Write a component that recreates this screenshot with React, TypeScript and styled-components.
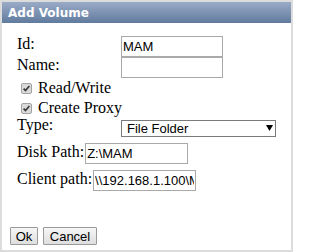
import styled, { createGlobalStyle } from "styled-components";

const GlobalStyle = createGlobalStyle`
  html, body {
    margin: 0;
    padding: 0;
    background: #ffffff;
  }
`;

const Dialog = styled.div`
  width: 293px;
  height: 252px;
  box-sizing: border-box;
  border: 2px solid #dcdcdc;
  background: #ffffff;
  display: flex;
  flex-direction: column;
`;

const TitleBar = styled.div`
  height: 21px;
  display: flex;
  align-items: center;
  padding-left: 6px;
  background: linear-gradient(#9aabc6, #607b9e);
  color: #ffffff;
  font-family: "DejaVu Sans", Verdana, sans-serif;
  font-weight: bold;
  font-size: 12px;
`;

const Form = styled.form`
  display: flex;
  flex-direction: column;
  padding: 13px 0 0 8px;
`;

const Row = styled.div<{ $h: number; $indent?: number; $top?: number }>`
  display: flex;
  align-items: center;
  height: ${(p) => p.$h}px;
  padding-left: ${(p) => p.$indent ?? 7}px;
  margin-top: ${(p) => p.$top ?? 0}px;
`;

const Label = styled.label<{ $w?: number; $lift?: number }>`
  font-family: "Liberation Serif", "Times New Roman", serif;
  font-size: 16px;
  color: #000000;
  width: ${(p) => (p.$w ? `${p.$w}px` : "auto")};
  margin-right: ${(p) => (p.$w ? 0 : 1)}px;
  margin-bottom: ${(p) => p.$lift ?? 5}px;
  white-space: nowrap;
  flex-shrink: 0;
`;

const TextInput = styled.input<{ $w: number }>`
  box-sizing: border-box;
  width: ${(p) => p.$w}px;
  height: 21px;
  margin: 0;
  padding: 1px 1px;
  border: 1px solid #a9a9a9;
  font-family: "Liberation Sans", Arial, sans-serif;
  font-size: 13px;
  color: #000000;
  background: #ffffff;
  outline: none;
`;

const CheckBox = styled.span`
  display: inline-flex;
  width: 11px;
  height: 11px;
  margin-right: 6px;
  margin-left: 4px;
`;

const CheckText = styled.span`
  font-family: "Liberation Serif", "Times New Roman", serif;
  font-size: 16px;
  color: #000000;
  margin-bottom: 1px;
`;

const SelectWrap = styled.div`
  position: relative;
  width: 155px;
  height: 17px;
`;

const Select = styled.select`
  appearance: none;
  box-sizing: border-box;
  width: 100%;
  height: 100%;
  margin: 0;
  padding: 0 0 0 5px;
  border: 1px solid #7a7a7a;
  border-radius: 0;
  background: #ffffff;
  font-family: "Liberation Sans", Arial, sans-serif;
  font-size: 13px;
  color: #000000;
  outline: none;
`;

const Arrow = styled.svg`
  position: absolute;
  right: 3px;
  top: 6px;
  pointer-events: none;
`;

const Buttons = styled.div`
  display: flex;
  gap: 5px;
  margin-top: 36px;
`;

const Button = styled.button<{ $w: number }>`
  box-sizing: border-box;
  width: ${(p) => p.$w}px;
  height: 18px;
  margin: 0;
  padding: 0;
  border: 1px solid #9a9a9a;
  border-radius: 1px;
  background: linear-gradient(#f6f6f6, #dedede);
  font-family: "Liberation Sans", Arial, sans-serif;
  font-size: 13px;
  color: #000000;
`;

function Check() {
  return (
    <CheckBox>
      <svg width="11" height="11" viewBox="0 0 11 11">
        <rect x="0.5" y="0.5" width="10" height="10" rx="1.5" fill="#d9d9d9" stroke="#a3a3a3" />
        <path d="M2.6 5.6 L4.5 7.6 L8.4 3" fill="none" stroke="#3a3a3a" strokeWidth="1.7" />
      </svg>
    </CheckBox>
  );
}

export default function App() {
  return (
    <>
      <GlobalStyle />
      <Dialog>
        <TitleBar>Add Volume</TitleBar>
        <Form onSubmit={(e) => e.preventDefault()}>
          <Row $h={21}>
            <Label $w={104}>Id:</Label>
            <TextInput $w={102} defaultValue="MAM" />
          </Row>
          <Row $h={21}>
            <Label $w={104}>Name:</Label>
            <TextInput $w={102} defaultValue="" />
          </Row>
          <Row $h={20} $indent={7}>
            <Check />
            <CheckText>Read/Write</CheckText>
          </Row>
          <Row $h={20} $indent={7}>
            <Check />
            <CheckText>Create Proxy</CheckText>
          </Row>
          <Row $h={18}>
            <Label $w={104} $lift={4}>Type:</Label>
            <SelectWrap>
              <Select defaultValue="folder">
                <option value="folder">File Folder</option>
              </Select>
              <Arrow width="7" height="6" viewBox="0 0 7 6">
                <polygon points="0,0 7,0 3.5,6" fill="#000000" />
              </Arrow>
            </SelectWrap>
          </Row>
          <Row $h={21} $top={7}>
            <Label $lift={3}>Disk Path:</Label>
            <TextInput $w={103} defaultValue="Z:\MAM" />
          </Row>
          <Row $h={21} $top={6}>
            <Label $lift={3}>Client path:</Label>
            <TextInput $w={103} defaultValue="\\192.168.1.100\MAM" />
          </Row>
          <Buttons>
            <Button $w={28} type="button">Ok</Button>
            <Button $w={54} type="button">Cancel</Button>
          </Buttons>
        </Form>
      </Dialog>
    </>
  );
}
